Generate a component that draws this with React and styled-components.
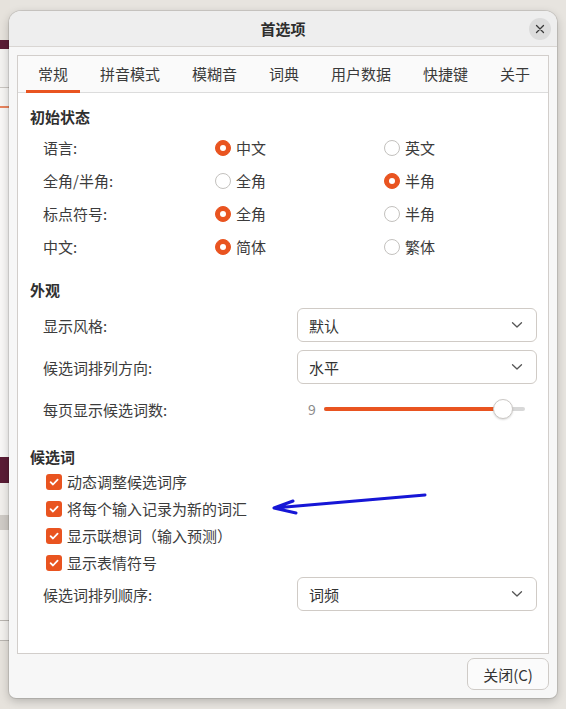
import React from 'react';
import styled, { createGlobalStyle } from 'styled-components';

const ORANGE = '#e95420';

const GlobalStyle = createGlobalStyle`
  html, body { margin: 0; padding: 0; }
  body {
    width: 566px;
    height: 709px;
    overflow: hidden;
    font-family: "Noto Sans CJK SC", "Noto Sans", sans-serif;
    color: #3c3c3c;
  }
  * { box-sizing: border-box; }
`;

const Page = styled.div`
  position: relative;
  width: 566px;
  height: 709px;
  padding: 11px 9px;
  background:
    linear-gradient(to bottom,
      #e6e2dc 0, #e6e2dc 40px,
      #5b1d36 40px, #5b1d36 49px,
      #f3f2f0 49px, #f3f2f0 87px,
      #c9c5c0 87px, #c9c5c0 88px,
      #f6f5f3 88px, #f6f5f3 106px,
      #e8845e 106px, #e8845e 108px,
      #f8f7f6 108px, #f8f7f6 457px,
      #5b1d36 457px, #5b1d36 483px,
      #f1efec 483px, #f1efec 515px,
      #cfcbc6 515px, #cfcbc6 530px,
      #f3f1ee 530px, #f3f1ee 620px,
      #b9b5b0 620px, #b9b5b0 621px,
      #f3f1ee 621px, #f3f1ee 640px,
      #b9b5b0 640px, #b9b5b0 641px,
      #e6e2dc 641px, #e6e2dc 709px) left top / 10px 100% no-repeat,
    #e7e4df;
`;

const Dialog = styled.div`
  width: 548px;
  height: 687px;
  display: flex;
  flex-direction: column;
  background: #f7f7f7;
  border-radius: 12px 12px 7px 7px;
  box-shadow: 0 0 0 1px rgba(0, 0, 0, 0.1), 0 3px 10px rgba(0, 0, 0, 0.22);
  overflow: hidden;
`;

const TitleBar = styled.div`
  height: 36px;
  flex: none;
  display: grid;
  grid-template-columns: 1fr auto 1fr;
  align-items: center;
  background: #eeeeee;
  border-bottom: 1px solid #d9d6d3;
`;

const Title = styled.div`
  grid-column: 2;
  font-size: 15px;
  font-weight: 700;
  color: #2e2e2e;
`;

const CloseCircle = styled.button`
  grid-column: 3;
  justify-self: end;
  margin-right: 6px;
  width: 22px;
  height: 22px;
  border: none;
  padding: 0;
  border-radius: 50%;
  background: #dcdcdc;
  display: flex;
  align-items: center;
  justify-content: center;
`;

const Body = styled.div`
  flex: 1;
  display: flex;
  flex-direction: column;
  padding: 8px 8px 0;
`;

const Frame = styled.div`
  height: 599px;
  flex: none;
  display: flex;
  flex-direction: column;
  background: #ffffff;
  border: 1px solid #d2cecb;
`;

const TabBar = styled.div`
  height: 37px;
  flex: none;
  display: flex;
  padding-left: 4px;
  border-bottom: 1px solid #dcdcdc;
  background: #fafafa;
`;

const Tab = styled.div`
  position: relative;
  padding: 0 16px;
  line-height: 36px;
  font-size: 15px;
  color: #3a3a3a;
  white-space: nowrap;
  &::after {
    content: '';
    display: ${p => (p.$active ? 'block' : 'none')};
    position: absolute;
    left: 4px;
    right: 4px;
    bottom: -1px;
    height: 3px;
    background: ${ORANGE};
  }
`;

const Content = styled.div`
  padding: 14px 11px 0 12px;
  display: flex;
  flex-direction: column;
`;

const Section = styled.div`
  display: flex;
  flex-direction: column;
  margin-top: ${p => p.$top || 0}px;
`;

const SectionTitle = styled.div`
  font-size: 15px;
  line-height: 20px;
  font-weight: 700;
  color: #2f2f2f;
  margin-bottom: ${p => p.$after || 0}px;
`;

const RadioRow = styled.div`
  display: grid;
  grid-template-columns: 172px 169px 1fr;
  align-items: center;
  height: 33px;
  padding-left: 13px;
  font-size: 15px;
`;

const Label = styled.span`
  font-size: 15px;
  color: #3c3c3c;
  white-space: nowrap;
`;

const Choice = styled.label`
  display: flex;
  align-items: center;
  gap: 5px;
  font-size: 15px;
  color: #3c3c3c;
`;

const RadioDot = styled.span`
  width: 16px;
  height: 16px;
  border-radius: 50%;
  flex: none;
  display: flex;
  align-items: center;
  justify-content: center;
  background: ${p => (p.$on ? ORANGE : '#ffffff')};
  border: 1px solid ${p => (p.$on ? ORANGE : '#c3c1be')};
  &::after {
    content: '';
    display: ${p => (p.$on ? 'block' : 'none')};
    width: 6px;
    height: 6px;
    border-radius: 50%;
    background: #ffffff;
  }
`;

const FieldRow = styled.div`
  display: grid;
  grid-template-columns: 1fr 240px;
  align-items: center;
  min-height: 34px;
  padding-left: 13px;
  margin-top: ${p => p.$top || 0}px;
`;

const Combo = styled.div`
  height: 34px;
  display: flex;
  align-items: center;
  justify-content: space-between;
  padding: 0 13px 0 11px;
  background: #ffffff;
  border: 1px solid #d0cbc6;
  border-radius: 6px;
  font-size: 15px;
  color: #333333;
`;

const SliderBox = styled.div`
  display: flex;
  align-items: center;
  gap: 8px;
  padding: 0 12px 0 11px;
  height: 34px;
`;

const SliderValue = styled.span`
  font-size: 14px;
  color: #8b8b8b;
  width: 8px;
`;

const Track = styled.div`
  position: relative;
  flex: 1;
  height: 4px;
  border-radius: 2px;
  background: #d8d8d8;
`;

const Fill = styled.div`
  height: 4px;
  border-radius: 2px;
  background: ${ORANGE};
`;

const Knob = styled.div`
  position: absolute;
  top: 50%;
  width: 20px;
  height: 20px;
  margin: -10px 0 0 -10px;
  border-radius: 50%;
  background: #ffffff;
  border: 1px solid #cbc8c5;
  box-shadow: 0 1px 2px rgba(0, 0, 0, 0.15);
`;

const CheckList = styled.div`
  display: flex;
  flex-direction: column;
  padding-left: 16px;
  margin-top: 1px;
`;

const CheckRow = styled.label`
  height: 27px;
  display: flex;
  align-items: center;
  gap: 5px;
  font-size: 15px;
  color: #3c3c3c;
`;

const CheckBox = styled.span`
  width: 16px;
  height: 16px;
  flex: none;
  border-radius: 3px;
  background: ${ORANGE};
  display: flex;
  align-items: center;
  justify-content: center;
`;

const Footer = styled.div`
  flex: 1;
  display: flex;
  justify-content: flex-end;
  align-items: flex-start;
  padding: 4px 0 0;
`;

const Button = styled.button`
  width: 82px;
  height: 32px;
  border: 1px solid #cfcbc7;
  border-radius: 7px;
  background: #fbfbfb;
  font-family: inherit;
  font-size: 15px;
  color: #333333;
  padding: 0;
`;

const Arrow = styled.svg`
  position: absolute;
  left: 270px;
  top: 488px;
  overflow: visible;
`;

const Chevron = () => (
  <svg width="12" height="8" viewBox="0 0 12 8">
    <path d="M1.5 1.8 L6 6 L10.5 1.8" fill="none" stroke="#555" strokeWidth="1.3" strokeLinecap="round" strokeLinejoin="round" />
  </svg>
);

const Tick = () => (
  <svg width="12" height="12" viewBox="0 0 12 12">
    <path d="M2.6 6.2 L5 8.5 L9.6 3.6" fill="none" stroke="#fff" strokeWidth="1.8" strokeLinecap="round" strokeLinejoin="round" />
  </svg>
);

const tabs = ['常规', '拼音模式', '模糊音', '词典', '用户数据', '快捷键', '关于'];

const radios = [
  { label: '语言:', a: '中文', b: '英文', sel: 0 },
  { label: '全角/半角:', a: '全角', b: '半角', sel: 1 },
  { label: '标点符号:', a: '全角', b: '半角', sel: 0 },
  { label: '中文:', a: '简体', b: '繁体', sel: 0 },
];

const checks = ['动态调整候选词序', '将每个输入记录为新的词汇', '显示联想词（输入预测）', '显示表情符号'];

const slider = { min: 1, max: 10, value: 9 };

export default function App() {
  const pct = ((slider.value - slider.min) / (slider.max - slider.min)) * 100;
  return (
    <Page>
      <GlobalStyle />
      <Dialog>
        <TitleBar>
          <Title>首选项</Title>
          <CloseCircle aria-label="close">
            <svg width="10" height="10" viewBox="0 0 10 10">
              <path d="M1.5 1.5 L8.5 8.5 M8.5 1.5 L1.5 8.5" stroke="#3a3a3a" strokeWidth="1.3" strokeLinecap="round" />
            </svg>
          </CloseCircle>
        </TitleBar>
        <Body>
          <Frame>
            <TabBar>
              {tabs.map((t, i) => (
                <Tab key={t} $active={i === 0}>{t}</Tab>
              ))}
            </TabBar>
            <Content>
              <Section>
                <SectionTitle $after={4}>初始状态</SectionTitle>
                {radios.map(r => (
                  <RadioRow key={r.label}>
                    <Label>{r.label}</Label>
                    <Choice><RadioDot $on={r.sel === 0} />{r.a}</Choice>
                    <Choice><RadioDot $on={r.sel === 1} />{r.b}</Choice>
                  </RadioRow>
                ))}
              </Section>
              <Section $top={17}>
                <SectionTitle $after={8}>外观</SectionTitle>
                <FieldRow>
                  <Label>显示风格:</Label>
                  <Combo>默认<Chevron /></Combo>
                </FieldRow>
                <FieldRow $top={8}>
                  <Label>候选词排列方向:</Label>
                  <Combo>水平<Chevron /></Combo>
                </FieldRow>
                <FieldRow $top={8}>
                  <Label>每页显示候选词数:</Label>
                  <SliderBox>
                    <SliderValue>{slider.value}</SliderValue>
                    <Track>
                      <Fill style={{ width: `${pct}%` }} />
                      <Knob style={{ left: `${pct}%` }} />
                    </Track>
                  </SliderBox>
                </FieldRow>
              </Section>
              <Section $top={21}>
                <SectionTitle>候选词</SectionTitle>
                <CheckList>
                  {checks.map(c => (
                    <CheckRow key={c}><CheckBox><Tick /></CheckBox>{c}</CheckRow>
                  ))}
                </CheckList>
                <FieldRow $top={1}>
                  <Label>候选词排列顺序:</Label>
                  <Combo>词频<Chevron /></Combo>
                </FieldRow>
              </Section>
            </Content>
          </Frame>
          <Footer>
            <Button>关闭(C)</Button>
          </Footer>
        </Body>
      </Dialog>
      <Arrow width="160" height="30" viewBox="0 0 160 30">
        <path d="M155 7 L4 20 M4 20 L23 13 M4 20 L26 25" fill="none" stroke="#1616d6" strokeWidth="3" strokeLinecap="round" strokeLinejoin="round" />
      </Arrow>
    </Page>
  );
}
